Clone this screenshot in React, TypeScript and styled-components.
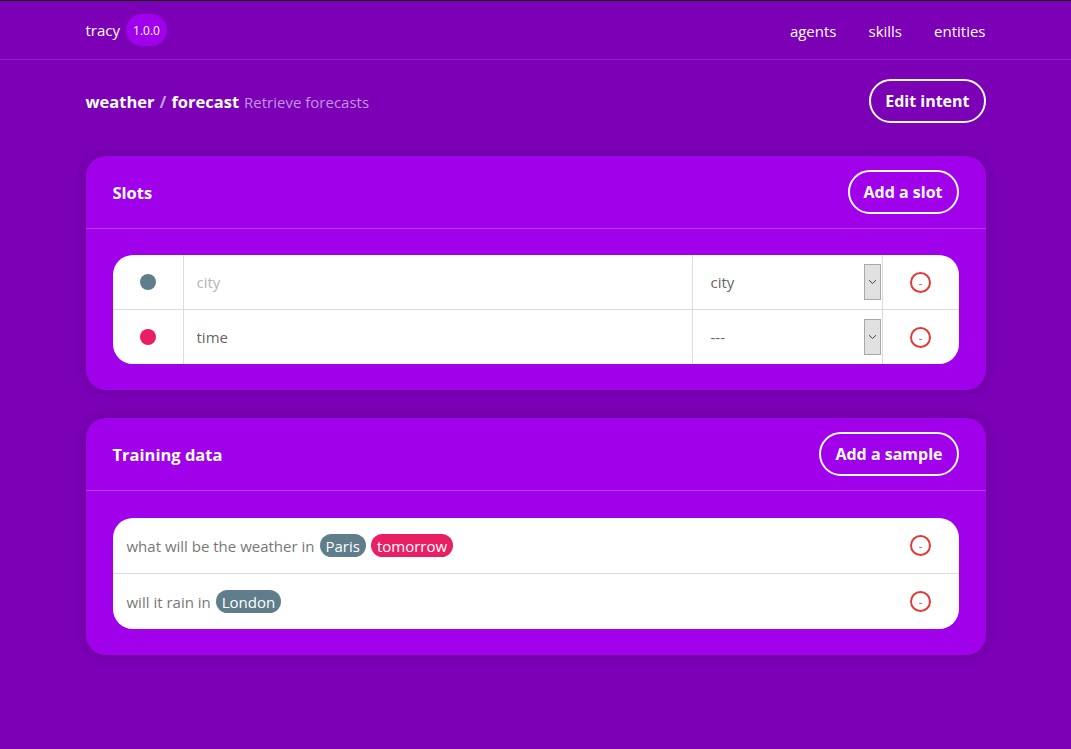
import React from "react";
import styled, { createGlobalStyle } from "styled-components";

const Global = createGlobalStyle`
  html, body { margin: 0; padding: 0; }
  body {
    background: #7b00b6;
    font-family: "Open Sans", "Noto Sans", sans-serif;
    color: #fff;
    min-height: 749px;
    border-top: 1px solid #111;
  }
`;

const Header = styled.header`
  border-bottom: 1px solid #9a16e0;
`;

const Container = styled.div`
  width: 900px;
  margin: 0 auto;
`;

const HeaderInner = styled(Container)`
  height: 58px;
  display: flex;
  align-items: center;
  justify-content: space-between;
`;

const Brand = styled.div`
  display: flex;
  align-items: center;
  gap: 6px;
  font-size: 15px;
`;

const Badge = styled.span`
  display: inline-flex;
  align-items: center;
  justify-content: center;
  height: 32px;
  padding: 0 7px;
  border-radius: 16px;
  background: #a100ec;
  font-size: 12px;
`;

const Nav = styled.nav`
  display: flex;
  gap: 32px;
  font-size: 15px;
  margin-top: 2px;
`;

const NavLink = styled.a`
  color: #fff;
  text-decoration: none;
`;

const TitleRow = styled(Container)`
  display: flex;
  align-items: center;
  justify-content: space-between;
  padding: 19px 0 33px;
`;

const Title = styled.h1`
  margin: 0;
  font-size: 16.5px;
  font-weight: 700;
  display: flex;
  align-items: baseline;
  gap: 5px;
`;

const Slash = styled.span`
  color: #c49be0;
`;

const Subtitle = styled.span`
  font-weight: 400;
  font-size: 15px;
  color: #c493e6;
`;

const OutlineButton = styled.button`
  height: 44px;
  padding: 0 14px;
  border: 2px solid #fff;
  border-radius: 22px;
  background: transparent;
  color: #fff;
  font-family: inherit;
  font-size: 16px;
  font-weight: 700;
  cursor: pointer;
`;

const Card = styled(Container)`
  background: #a100eb;
  border-radius: 20px;
  box-shadow: 0 0 8px rgba(60, 0, 90, 0.35);
  margin-bottom: 28px;
`;

const CardHeader = styled.div`
  display: flex;
  align-items: center;
  justify-content: space-between;
  padding: 14px 27px;
  border-bottom: 1px solid #b43cf2;
`;

const CardTitle = styled.h2`
  margin: 0;
  font-size: 16.5px;
  font-weight: 700;
`;

const CardBody = styled.div<{ $top: number }>`
  padding: ${(p) => p.$top}px 27px 26px;
`;

const Table = styled.div`
  background: #fff;
  border-radius: 20px;
  overflow: hidden;
`;

const Row = styled.div<{ $h: number }>`
  display: flex;
  align-items: stretch;
  height: ${(p) => p.$h}px;
  & + & {
    border-top: 1px solid #dddddd;
  }
`;

const DotCell = styled.div`
  width: 70px;
  flex: none;
  display: flex;
  align-items: center;
  justify-content: center;
  border-right: 1px solid #dddddd;
`;

const Dot = styled.span<{ $color: string }>`
  width: 16px;
  height: 16px;
  border-radius: 50%;
  background: ${(p) => p.$color};
`;

const NameInput = styled.input`
  flex: 1;
  min-width: 0;
  border: none;
  border-right: 1px solid #dddddd;
  padding: 0 13px;
  font-family: inherit;
  font-size: 15px;
  color: #666;
  outline: none;
  background: transparent;
  &::placeholder {
    color: #b5b5b5;
  }
`;

const SelectCell = styled.div`
  width: 190px;
  flex: none;
  display: flex;
  align-items: center;
  justify-content: space-between;
  padding: 0 1px 0 18px;
  box-sizing: border-box;
  border-right: 1px solid #dddddd;
  font-size: 15px;
  color: #666;
`;

const ArrowBox = styled.span`
  width: 15px;
  height: 34px;
  border: 1px solid #a9a9a9;
  background: #e1e1e1;
  display: flex;
  align-items: center;
  justify-content: center;
`;

const RemoveCell = styled.div`
  width: 76px;
  flex: none;
  display: flex;
  align-items: center;
  justify-content: center;
`;

const RemoveButton = styled.button`
  width: 21px;
  height: 21px;
  padding: 0;
  border: 2px solid #e53935;
  border-radius: 50%;
  background: transparent;
  color: #e53935;
  font-family: inherit;
  font-size: 11px;
  line-height: 1;
  display: flex;
  align-items: center;
  justify-content: center;
  cursor: pointer;
`;

const SampleText = styled.div`
  flex: 1;
  display: flex;
  align-items: center;
  gap: 5px;
  padding: 0 14px;
  font-size: 15px;
  color: #777;
`;

const Chip = styled.span<{ $color: string }>`
  display: inline-flex;
  align-items: center;
  height: 23px;
  padding: 0 6px;
  border-radius: 12px;
  background: ${(p) => p.$color};
  color: #fff;
  font-size: 15px;
`;

const GREY = "#607d8b";
const PINK = "#e91e63";

const Chevron = () => (
  <svg width="9" height="6" viewBox="0 0 9 6">
    <path d="M1 1.2 L4.5 4.5 L8 1.2" fill="none" stroke="#444" strokeWidth="1" />
  </svg>
);

const slots = [
  { color: GREY, name: "", placeholder: "city", entity: "city" },
  { color: PINK, name: "time", placeholder: "", entity: "---" },
];

type Part = { text: string; chip?: string };
const samples: Part[][] = [
  [
    { text: "what will be the weather in" },
    { text: "Paris", chip: GREY },
    { text: "tomorrow", chip: PINK },
  ],
  [{ text: "will it rain in" }, { text: "London", chip: GREY }],
];

export default function App() {
  return (
    <>
      <Global />
      <Header>
        <HeaderInner>
          <Brand>
            tracy <Badge>1.0.0</Badge>
          </Brand>
          <Nav>
            <NavLink href="#">agents</NavLink>
            <NavLink href="#">skills</NavLink>
            <NavLink href="#">entities</NavLink>
          </Nav>
        </HeaderInner>
      </Header>

      <TitleRow>
        <Title>
          weather <Slash>/</Slash> forecast <Subtitle>Retrieve forecasts</Subtitle>
        </Title>
        <OutlineButton>Edit intent</OutlineButton>
      </TitleRow>

      <Card>
        <CardHeader>
          <CardTitle>Slots</CardTitle>
          <OutlineButton>Add a slot</OutlineButton>
        </CardHeader>
        <CardBody $top={26}>
          <Table>
            {slots.map((s, i) => (
              <Row key={i} $h={54}>
                <DotCell>
                  <Dot $color={s.color} />
                </DotCell>
                <NameInput defaultValue={s.name} placeholder={s.placeholder} />
                <SelectCell>
                  {s.entity}
                  <ArrowBox>
                    <Chevron />
                  </ArrowBox>
                </SelectCell>
                <RemoveCell>
                  <RemoveButton>-</RemoveButton>
                </RemoveCell>
              </Row>
            ))}
          </Table>
        </CardBody>
      </Card>

      <Card>
        <CardHeader>
          <CardTitle>Training data</CardTitle>
          <OutlineButton>Add a sample</OutlineButton>
        </CardHeader>
        <CardBody $top={27}>
          <Table>
            {samples.map((parts, i) => (
              <Row key={i} $h={55}>
                <SampleText>
                  {parts.map((p, j) =>
                    p.chip ? (
                      <Chip key={j} $color={p.chip}>
                        {p.text}
                      </Chip>
                    ) : (
                      <span key={j}>{p.text}</span>
                    )
                  )}
                </SampleText>
                <RemoveCell>
                  <RemoveButton>-</RemoveButton>
                </RemoveCell>
              </Row>
            ))}
          </Table>
        </CardBody>
      </Card>
    </>
  );
}
